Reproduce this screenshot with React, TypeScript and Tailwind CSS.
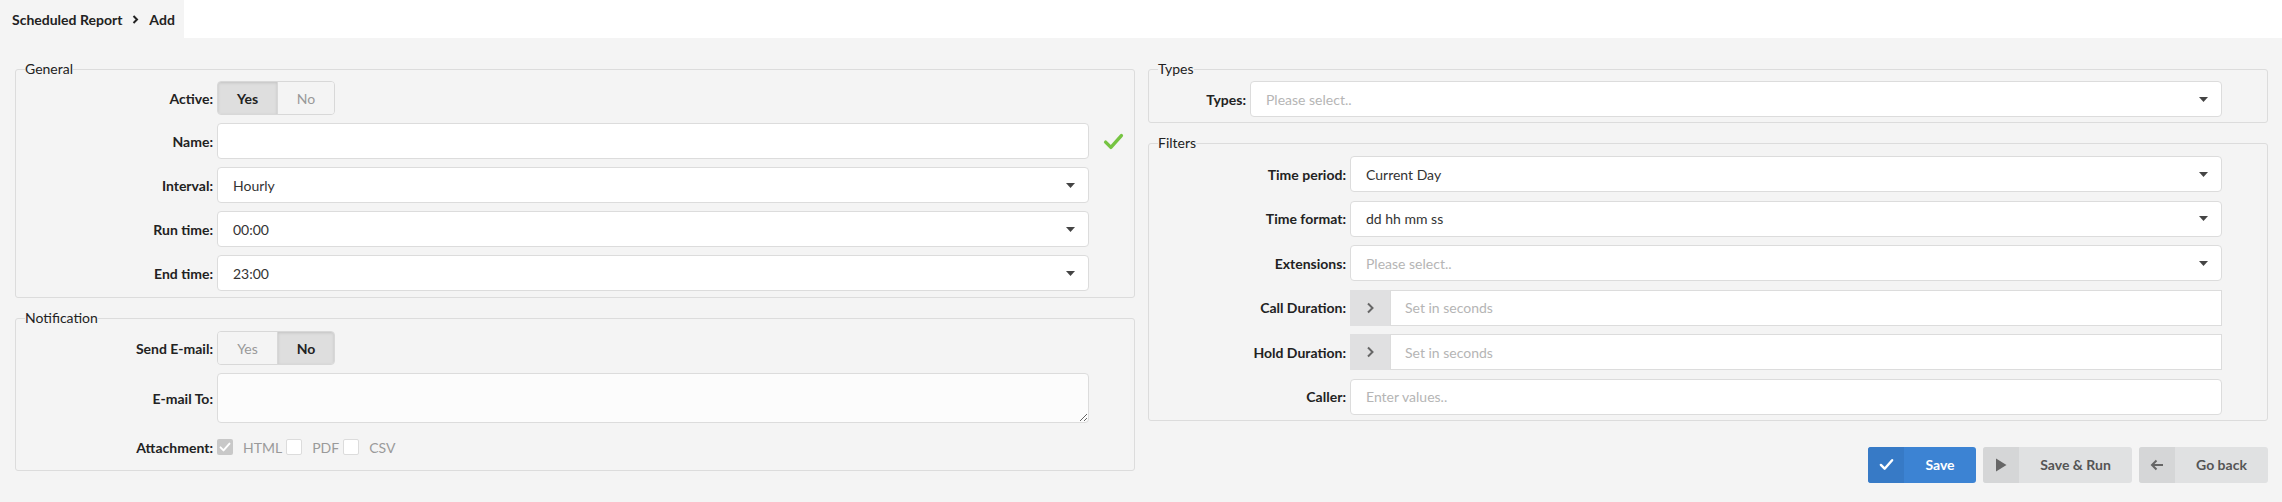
import React from "react";

const font = { fontFamily: "Lato, 'Open Sans', sans-serif" };

const Caret = () => (
	<svg width="9" height="5" viewBox="0 0 9 5" className="shrink-0">
		<path d="M0 0h9L4.5 5z" fill="#444" />
	</svg>
);

const Check = ({ color, size = 16 }: { color: string; size?: number }) => (
	<svg width={size} height={size} viewBox="0 0 16 16">
		<path d="M2 8.5l4 4 8-9" fill="none" stroke={color} strokeWidth="2.6" strokeLinecap="round" strokeLinejoin="round" />
	</svg>
);

const Label = ({ text, width = "w-[197px]" }: { text: string; width?: string }) => (
	<div className={`${width} shrink-0 text-right text-[14px] font-bold text-[#222]`}>{text}</div>
);

const Row = ({
	label,
	labelWidth,
	children,
	extra,
	h = "h-[36px]",
}: {
	label: string;
	labelWidth?: string;
	children: React.ReactNode;
	extra?: React.ReactNode;
	h?: string;
}) => (
	<div className={`flex items-center gap-[4px] ${h}`}>
		<Label text={label} width={labelWidth} />
		<div className="flex h-full min-w-0 flex-1 items-center">{children}</div>
		<div className="flex w-[41px] shrink-0 items-center justify-center">{extra}</div>
	</div>
);

const Select = ({ value, placeholder }: { value?: string; placeholder?: string }) => (
	<div className="flex h-full w-full items-center justify-between rounded-[4px] border border-[#dcdcdc] bg-white pl-[15px] pr-[13px] text-[14px]">
		{value ? <span className="text-[#333]">{value}</span> : <span className="text-[#b5b5b5]">{placeholder}</span>}
		<Caret />
	</div>
);

const Toggle = ({ active }: { active: "yes" | "no" }) => (
	<div className="flex h-[34px] overflow-hidden rounded-[4px] border border-[#d8d8d8] text-[14px]">
		<div
			className={`flex w-[60px] items-center justify-center border-r border-[#d8d8d8] ${
				active === "yes" ? "bg-[#dedede] font-bold text-[#222] shadow-[inset_0_1px_3px_rgba(0,0,0,0.12)]" : "bg-[#f4f4f4] text-[#999]"
			}`}
		>
			Yes
		</div>
		<div
			className={`flex w-[56px] items-center justify-center ${
				active === "no" ? "bg-[#dedede] font-bold text-[#222] shadow-[inset_0_1px_3px_rgba(0,0,0,0.12)]" : "bg-[#f4f4f4] text-[#999]"
			}`}
		>
			No
		</div>
	</div>
);

const Duration = () => (
	<div className="flex h-full w-full">
		<div className="flex w-[40px] shrink-0 items-center justify-center bg-[#e0e0e1]">
			<svg width="8" height="12" viewBox="0 0 8 12">
				<path d="M2 1.5L6.5 6 2 10.5" fill="none" stroke="#666" strokeWidth="2" />
			</svg>
		</div>
		<div className="flex h-full flex-1 items-center border border-[#dcdcdc] bg-white pl-[14px] text-[14px] text-[#b5b5b5]">
			Set in seconds
		</div>
	</div>
);

const Box = ({ checked, label }: { checked?: boolean; label: string }) => (
	<div className="flex items-center">
		{checked ? (
			<div className="flex h-[16px] w-[16px] items-center justify-center rounded-[2px] bg-[#c8c8c8]">
				<Check color="#fff" size={12} />
			</div>
		) : (
			<div className="h-[16px] w-[16px] rounded-[2px] border border-[#dcdcdc] bg-white" />
		)}
		<span className="ml-[10px] mr-[4px] text-[14px] text-[#9a9a9a]">{label}</span>
	</div>
);

const Fieldset = ({
	legend,
	className = "",
	children,
}: {
	legend: string;
	className?: string;
	children: React.ReactNode;
}) => (
	<fieldset className={`rounded-[3px] border border-[#dcdcdc] ${className}`}>
		<legend className="ml-[9px] text-[14px] leading-[20px] text-[#222]">{legend}</legend>
		{children}
	</fieldset>
);

const Button = ({
	icon,
	text,
	width,
	primary,
}: {
	icon: React.ReactNode;
	text: string;
	width: string;
	primary?: boolean;
}) => (
	<div
		className={`flex h-[36px] ${width} overflow-hidden rounded-[3px] text-[14px] font-bold ${
			primary ? "bg-[#3c83d3] text-white" : "bg-[#e0e1e2] text-[#555]"
		}`}
	>
		<div className={`flex w-[36px] items-center justify-center ${primary ? "bg-[#377ac6]" : "bg-[#d5d6d7]"}`}>{icon}</div>
		<div className="flex flex-1 items-center justify-center">{text}</div>
	</div>
);

export default function App() {
	return (
		<div className="flex h-[502px] w-full flex-col bg-white" style={font}>
			<div className="flex h-[38px] shrink-0">
				<div className="flex w-[184px] items-center bg-[#f4f4f4] pl-[12px] text-[14px] font-bold text-[#222]">
					Scheduled Report
					<svg width="7" height="9" viewBox="0 0 7 9" className="mx-[10px]">
						<path d="M1.5 1L5 4.5 1.5 8" fill="none" stroke="#222" strokeWidth="2" />
					</svg>
					Add
				</div>
			</div>
			<div className="grid flex-1 grid-cols-2 gap-[13px] bg-[#f4f4f4] pl-[15px] pr-[14px] pt-[21px]">
				<div className="flex flex-col">
					<Fieldset legend="General" className="pb-[6px] pt-[2px]">
						<div className="flex flex-col gap-[8px]">
							<Row label="Active:" h="h-[34px]">
								<Toggle active="yes" />
							</Row>
							<Row label="Name:" extra={<Check color="#76c442" size={21} />}>
								<div className="h-full w-full rounded-[4px] border border-[#dcdcdc] bg-white" />
							</Row>
							<Row label="Interval:">
								<Select value="Hourly" />
							</Row>
							<Row label="Run time:">
								<Select value="00:00" />
							</Row>
							<Row label="End time:">
								<Select value="23:00" />
							</Row>
						</div>
					</Fieldset>
					<Fieldset legend="Notification" className="mt-[10px] pb-[7px] pt-[3px]">
						<div className="flex flex-col gap-[8px]">
							<Row label="Send E-mail:" h="h-[34px]">
								<Toggle active="no" />
							</Row>
							<Row label="E-mail To:" h="h-[50px]">
								<textarea className="h-full w-full resize-y rounded-[4px] border border-[#dcdcdc] bg-[#fcfcfc] outline-none" />
							</Row>
							<Row label="Attachment:" h="h-[32px]">
								<Box checked label="HTML" />
								<Box label="PDF" />
								<Box label="CSV" />
							</Row>
						</div>
					</Fieldset>
				</div>
				<div className="flex flex-col">
					<Fieldset legend="Types" className="pb-[5px] pt-[2px]">
						<Row label="Types:" labelWidth="w-[97px]">
							<Select placeholder="Please select.." />
						</Row>
					</Fieldset>
					<Fieldset legend="Filters" className="mt-[10px] pb-[5px] pt-[3px]">
						<div className="flex flex-col gap-[8.6px]">
							<Row label="Time period:">
								<Select value="Current Day" />
							</Row>
							<Row label="Time format:">
								<Select value="dd hh mm ss" />
							</Row>
							<Row label="Extensions:">
								<Select placeholder="Please select.." />
							</Row>
							<Row label="Call Duration:">
								<Duration />
							</Row>
							<Row label="Hold Duration:">
								<Duration />
							</Row>
							<Row label="Caller:">
								<div className="flex h-full w-full items-center rounded-[4px] border border-[#dcdcdc] bg-white pl-[15px] text-[14px] text-[#b5b5b5]">
									Enter values..
								</div>
							</Row>
						</div>
					</Fieldset>
					<div className="mt-[26px] flex justify-end gap-[7px]">
						<Button primary width="w-[108px]" text="Save" icon={<Check color="#fff" size={15} />} />
						<Button
							width="w-[149px]"
							text="Save & Run"
							icon={
								<svg width="12" height="14" viewBox="0 0 12 14">
									<path d="M1 0.5L11.5 7 1 13.5z" fill="#666" />
								</svg>
							}
						/>
						<Button
							width="w-[129px]"
							text="Go back"
							icon={
								<svg width="14" height="12" viewBox="0 0 14 12">
									<path d="M13 6H2M6.5 1.5L2 6l4.5 4.5" fill="none" stroke="#666" strokeWidth="2" />
								</svg>
							}
						/>
					</div>
				</div>
			</div>
		</div>
	);
}
